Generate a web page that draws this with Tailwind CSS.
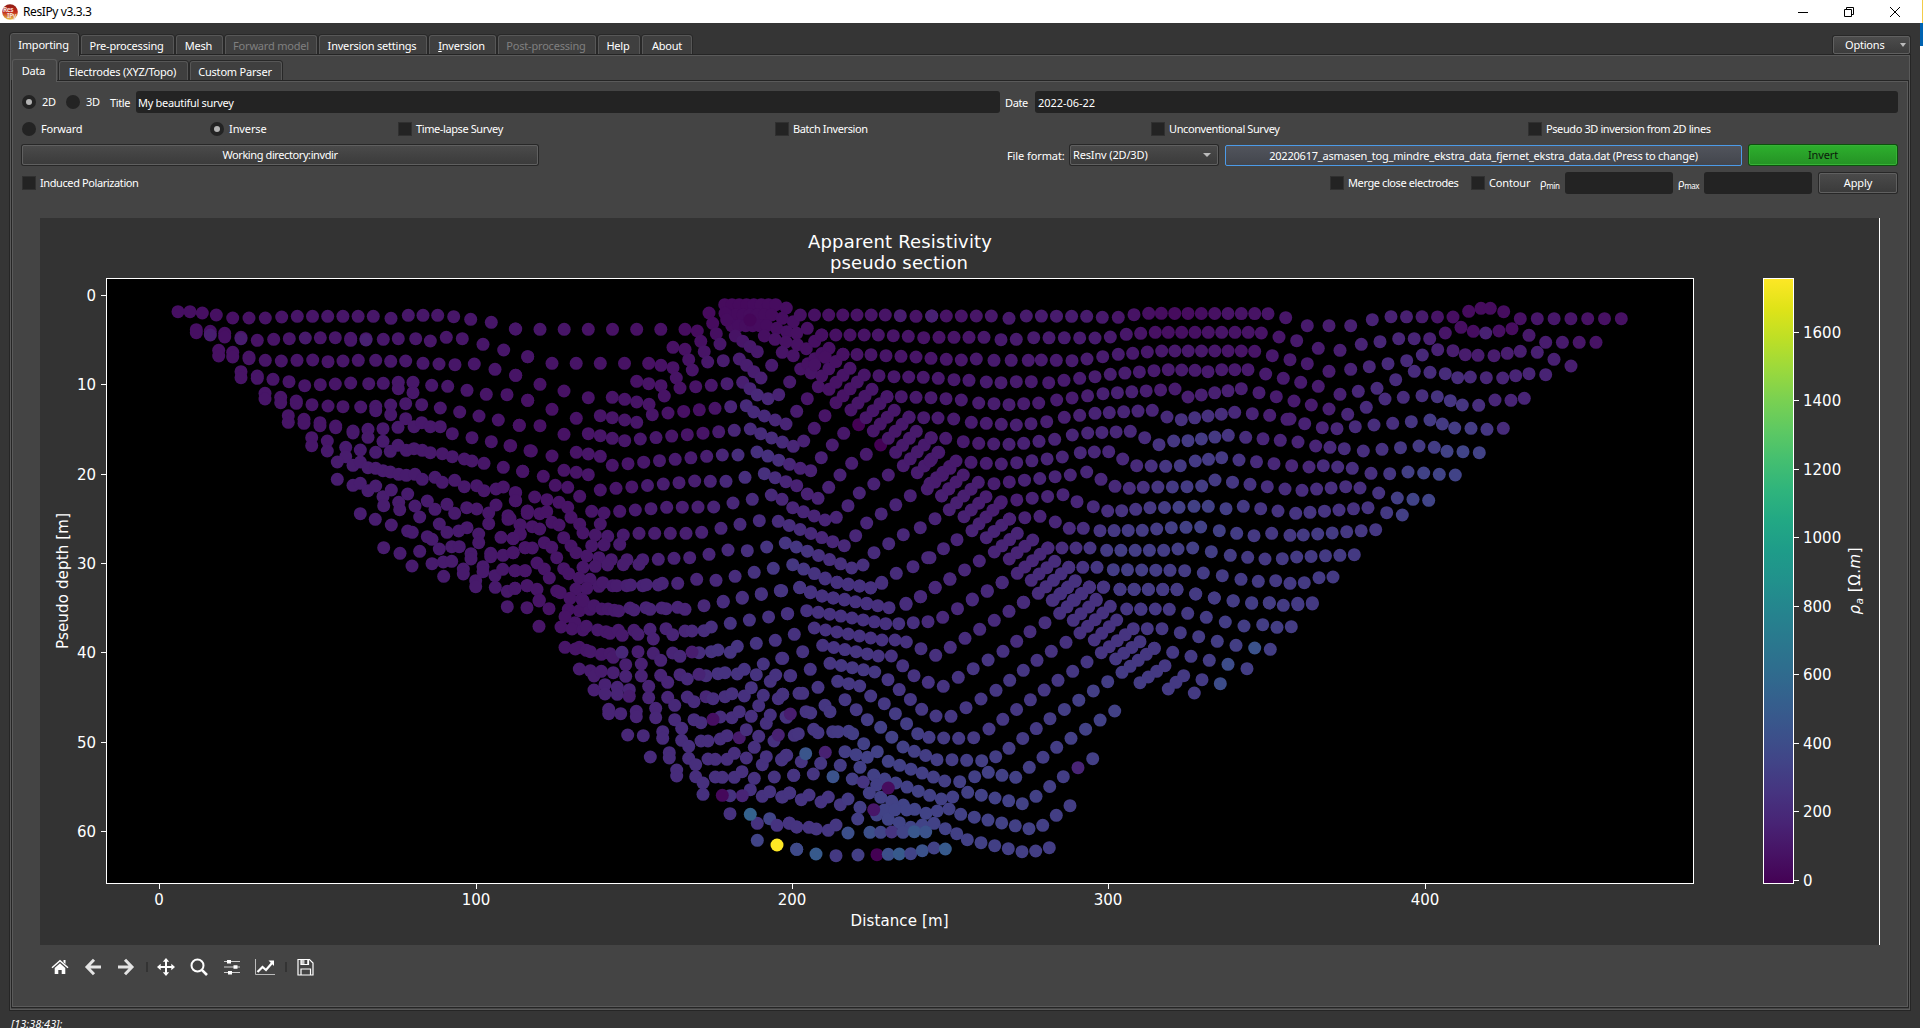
<!DOCTYPE html>
<html lang="en">
<head>
<meta charset="utf-8">
<title>ResIPy v3.3.3</title>
<script src="https://cdn.jsdelivr.net/npm/@tailwindcss/browser@4"></script>
</head>
<body class="w-[1923px] h-[1028px] overflow-hidden bg-[#353535] font-['Noto_Sans',sans-serif] text-[11px] leading-4 tracking-[-0.4px] text-white whitespace-nowrap flex">
<div class="w-[1920px] h-full flex flex-col shrink-0">
  <header class="h-[23px] shrink-0 bg-white text-black flex items-center pl-[2px] pr-[19px]">
    <svg class="size-4" viewBox="0 0 16 16"><defs><linearGradient id="lg" x1="0" y1="0" x2="0" y2="1"><stop offset="0" stop-color="#8c1a12"/><stop offset=".5" stop-color="#c22a1c"/><stop offset="1" stop-color="#e8c64a"/></linearGradient></defs><circle cx="8" cy="8" r="7.8" fill="url(#lg)"/><text x="1" y="7.5" font-size="6.5" font-weight="bold" fill="#f3dcd4">Res</text><text x="5" y="13.5" font-size="6.5" font-weight="bold" fill="#f3dcd4">IPy</text></svg>
    <span class="ml-[5px] text-[12px]">ResIPy v3.3.3</span>
    <div class="ml-auto flex items-center gap-[34px]">
      <svg class="w-[12px] h-[12px]" viewBox="0 0 12 12"><path d="M1 6.5h10" stroke="#000"/></svg>
      <svg class="w-[12px] h-[12px]" viewBox="0 0 12 12" fill="none" stroke="#000"><path d="M1.5 3.5h7v7h-7zM3.5 3.5v-2h7v7h-2"/></svg>
      <svg class="w-[12px] h-[12px]" viewBox="0 0 12 12"><path d="M1 1l10 10M11 1L1 11" stroke="#000"/></svg>
    </div>
  </header>

  <nav class="h-[32px] shrink-0 flex items-end pl-[10px] pr-[10px] text-center tracking-[-0.2px]">
    <div class="w-[69px] h-[23px] -mb-px z-10 rounded-t-[3px] border border-b-0 border-[#5a5a5a] bg-[#444] pt-[3px] pr-[2px] outline outline-[#242424] [clip-path:inset(-1px_-1px_0_-1px)]">Importing</div>
    <div class="ml-[2px] w-[93px] h-[20px] rounded-t-[3px] border border-b-0 border-[#575757] bg-[#3f3f3f] pt-[2px] pr-[2px] shadow-[0_0_0_1px_#282828]">Pre-processing</div>
    <div class="ml-[2px] w-[47px] h-[20px] rounded-t-[3px] border border-b-0 border-[#575757] bg-[#3f3f3f] pt-[2px] pr-[2px] shadow-[0_0_0_1px_#282828]">Mesh</div>
    <div class="ml-[2px] w-[92px] h-[20px] rounded-t-[3px] border border-b-0 border-[#575757] bg-[#3f3f3f] pt-[2px] shadow-[0_0_0_1px_#282828] text-[#7f7f7f]">Forward model</div>
    <div class="ml-[2px] w-[108px] h-[20px] rounded-t-[3px] border border-b-0 border-[#575757] bg-[#3f3f3f] pt-[2px] pr-[2px] shadow-[0_0_0_1px_#282828]">Inversion settings</div>
    <div class="ml-[2px] w-[67px] h-[20px] rounded-t-[3px] border border-b-0 border-[#575757] bg-[#3f3f3f] pt-[2px] pr-[2px] shadow-[0_0_0_1px_#282828]"><span class="underline">I</span>nversion</div>
    <div class="ml-[2px] w-[98px] h-[20px] rounded-t-[3px] border border-b-0 border-[#575757] bg-[#3f3f3f] pt-[2px] pr-[2px] shadow-[0_0_0_1px_#282828] text-[#7f7f7f]">Post-processing</div>
    <div class="ml-[2px] w-[42px] h-[20px] rounded-t-[3px] border border-b-0 border-[#575757] bg-[#3f3f3f] pt-[2px] pr-[2px] shadow-[0_0_0_1px_#282828]">Help</div>
    <div class="ml-[2px] w-[50px] h-[20px] rounded-t-[3px] border border-b-0 border-[#575757] bg-[#3f3f3f] pt-[2px] shadow-[0_0_0_1px_#282828]">About</div>
    <div class="ml-auto mb-[1px] w-[77px] h-[18px] flex items-center rounded-[2px] border border-[#606060] bg-linear-to-b from-[#4c4c4c] to-[#3c3c3c] shadow-[0_0_0_1px_#272727] pl-[11px] pr-[3px]">Options<svg class="ml-auto w-[6px] h-[4px]" viewBox="0 0 6 4"><path d="M0 0h6L3 4z" fill="#bbb"/></svg></div>
  </nav>

  <main class="ml-[10px] w-[1900px] h-[955px] shrink-0 bg-[#444] border border-[#5a5a5a] shadow-[0_0_0_1px_#252525] flex flex-col">
    <nav class="h-[25px] shrink-0 flex items-end pl-[1px] text-center tracking-[-0.2px]">
      <div class="w-[45px] h-[23px] -mb-px z-10 rounded-t-[3px] border border-b-0 border-[#5a5a5a] bg-[#444] pt-[3px] pr-[2px]">Data</div>
      <div class="ml-[2px] w-[129px] h-[20px] rounded-t-[3px] border border-b-0 border-[#575757] bg-[#3f3f3f] pt-[2px] pr-[2px] shadow-[0_0_0_1px_#282828]">Electrodes (XYZ/Topo)</div>
      <div class="ml-[2px] w-[92px] h-[20px] rounded-t-[3px] border border-b-0 border-[#575757] bg-[#3f3f3f] pt-[2px] pr-[2px] shadow-[0_0_0_1px_#282828]">Custom Parser</div>
    </nav>
    <section class="mx-[1px] mb-[2px] flex-1 border border-[#5a5a5a] shadow-[0_0_0_1px_#252525] flex flex-col pl-[9px] pr-[9px] pt-[9px]">
      <div class="h-[22px] shrink-0 flex items-center">
        <i class="size-[14px] rounded-full bg-[#232323] flex items-center justify-center"><b class="size-[6px] rounded-full bg-[#b4b4b4]"></b></i><span class="ml-[6px] w-[24px]">2D</span>
        <i class="size-[14px] rounded-full bg-[#232323]"></i><span class="ml-[6px] w-[24px]">3D</span>
        <span class="w-[26px] pt-px">Title</span>
        <div class="w-[864px] h-[22px] rounded-[3px] bg-[#232323] pl-[2px] pt-[4px] tracking-[-0.3px]">My beautiful survey</div>
        <span class="ml-[5px] w-[30px] pt-px">Date</span>
        <div class="flex-1 h-[22px] rounded-[3px] bg-[#232323] pl-[3px] pt-[4px] tracking-[-0.05px]">2022-06-22</div>
      </div>
      <div class="mt-[8px] h-[15px] shrink-0 flex items-center">
        <div class="w-[188px] flex items-center gap-[5px]"><i class="size-[14px] rounded-full bg-[#232323]"></i><span class="tracking-[-0.2px]">Forward</span></div>
        <div class="w-[188px] flex items-center gap-[5px]"><i class="size-[14px] rounded-full bg-[#232323] flex items-center justify-center"><b class="size-[6px] rounded-full bg-[#b4b4b4]"></b></i><span class="tracking-[-0.1px]">Inverse</span></div>
        <div class="w-[377px] flex items-center gap-[4px]"><i class="size-[14px] bg-[#232323] border border-[#303030]"></i>Time-lapse Survey</div>
        <div class="w-[376px] flex items-center gap-[4px]"><i class="size-[14px] bg-[#232323] border border-[#303030]"></i>Batch Inversion</div>
        <div class="w-[377px] flex items-center gap-[4px]"><i class="size-[14px] bg-[#232323] border border-[#303030]"></i>Unconventional Survey</div>
        <div class="flex items-center gap-[4px]"><i class="size-[14px] bg-[#232323] border border-[#303030]"></i>Pseudo 3D inversion from 2D lines</div>
      </div>
      <div class="mt-[9px] h-[20px] shrink-0 flex items-center text-center">
        <div class="w-[516px] h-[20px] leading-[18px] rounded-[2px] border border-[#606060] bg-linear-to-b from-[#4a4a4a] to-[#3b3b3b] shadow-[0_0_0_1px_#272727]">Working directory:invdir</div>
        <span class="ml-[469px] w-[63px] text-left pt-px tracking-[-0.1px]">File format:</span>
        <div class="w-[148px] h-[20px] rounded-[2px] border border-[#606060] bg-linear-to-b from-[#4a4a4a] to-[#3b3b3b] shadow-[0_0_0_1px_#272727] flex items-center pl-[2px] pr-[6px] tracking-[-0.15px]">ResInv (2D/3D)<svg class="ml-auto w-[8px] h-[4px]" viewBox="0 0 8 4"><path d="M0 0h8L4 4z" fill="#bbb"/></svg></div>
        <div class="ml-[7px] w-[517px] h-[21px] leading-[19px] rounded-[2px] border border-[#4c9be8] bg-linear-to-b from-[#51545c] to-[#43464d] tracking-[-0.21px]">20220617_asmasen_tog_mindre_ekstra_data_fjernet_ekstra_data.dat (Press to change)</div>
        <div class="ml-[7px] w-[148px] h-[20px] leading-[18px] rounded-[2px] border border-[#37b337] bg-linear-to-b from-[#2dae2d] to-[#259325] shadow-[0_0_0_1px_#0d500d] text-[#0b1a0b] tracking-[-0.1px]">Invert</div>
      </div>
      <div class="mt-[7px] h-[22px] shrink-0 flex items-center">
        <i class="size-[14px] bg-[#232323] border border-[#303030]"></i><span class="ml-[4px]">Induced Polarization</span>
        <div class="ml-auto flex items-center">
          <i class="size-[14px] bg-[#232323] border border-[#303030]"></i><span class="ml-[4px] w-[123px]">Merge close electrodes</span>
          <i class="size-[14px] bg-[#232323] border border-[#303030]"></i><span class="ml-[4px] w-[51px] tracking-[-0.15px]">Contour</span>
          <span class="w-[25px]">ρ<sub class="text-[8px]">min</sub></span><div class="w-[108px] h-[22px] rounded-[3px] bg-[#232323]"></div>
          <span class="ml-[5px] w-[26px]">ρ<sub class="text-[8px]">max</sub></span><div class="w-[108px] h-[22px] rounded-[3px] bg-[#232323]"></div>
          <div class="ml-[7px] mr-px w-[78px] h-[20px] leading-[17px] rounded-[2px] border border-[#606060] bg-linear-to-b from-[#4a4a4a] to-[#3b3b3b] shadow-[0_0_0_1px_#272727] text-center tracking-[-0.1px]">Apply</div>
        </div>
      </div>
      <svg id="plot" class="mt-[24px] ml-[18px] w-[1840px] h-[727px] shrink-0 font-['DejaVu_Sans',sans-serif] tracking-normal" viewBox="40 218 1840 727" fill="#fff">
        <defs><linearGradient id="vir" x1="0" y1="1" x2="0" y2="0"></linearGradient></defs>
        <rect x="40" y="218" width="1839" height="727" fill="#333"/>
        <rect x="1879" y="218" width="1" height="727"/>
        <rect x="106.5" y="278.5" width="1587" height="605" fill="#000" stroke="#fff"/>
        <g id="dots"></g>
        <rect x="1763.5" y="278.5" width="30" height="605" fill="url(#vir)" stroke="#fff"/>
        <g id="ticks" stroke="#fff"></g>
        <g id="labels" font-size="15"></g>
        <g text-anchor="middle">
          <text x="900" y="248" font-size="18" textLength="184">Apparent Resistivity</text>
          <text x="899" y="269" font-size="18" textLength="138">pseudo section</text>
          <text x="899.5" y="926" font-size="15" textLength="98">Distance [m]</text>
          <text transform="translate(68 581) rotate(-90)" font-size="15" textLength="136">Pseudo depth [m]</text>
          <text transform="translate(1860 581) rotate(-90)" font-size="15" textLength="67"><tspan font-style="italic">ρ</tspan><tspan font-style="italic" font-size="10.5" dy="3">a</tspan><tspan dy="-3"> [Ω.</tspan><tspan font-style="italic">m</tspan>]</text>
        </g>
      </svg>
      <div class="mt-[6px] h-[32px] shrink-0 flex items-center pl-[29px] text-[#e6e6e6]">
        <svg class="w-[18px] h-[18px]" viewBox="0 0 18 18" fill="#fff"><path d="M9 5.2l5.3 4.8v6h-3.6v-4H7.3v4H3.700v-6z"/><path d="M1 9.700l8-7 8 7" fill="none" stroke="#fff" stroke-width="1.500"/><path d="M12.500 2h2v4l-2-1.700z"/></svg>
        <svg class="ml-[15px] w-[18px] h-[18px]" viewBox="0 0 18 18" fill="none" stroke="#e4e4e4" stroke-width="3"><path d="M17 9H4M10 1.800L3 9l7 7.200"/></svg>
        <svg class="ml-[15px] w-[18px] h-[18px]" viewBox="0 0 18 18" fill="none" stroke="#e4e4e4" stroke-width="3"><path d="M1 9h13M8 1.800L15 9l-7 7.200"/></svg>
        <i class="ml-[11px] w-[2px] h-[10px] bg-[#333]"></i>
        <svg class="ml-[9px] w-[18px] h-[18px]" viewBox="0 0 18 18" fill="#fff"><path d="M9 0l3.200 3.700H10v4.300h4.300V5.800L18 9l-3.700 3.200V10H10v4.300h2.200L9 18l-3.200-3.700H8V10H3.700v2.200L0 9l3.700-3.200V8H8V3.700H5.800z"/></svg>
        <svg class="ml-[15px] w-[18px] h-[18px]" viewBox="0 0 18 18" fill="none" stroke="#fff"><circle cx="7.500" cy="7.500" r="6" stroke-width="2"/><path d="M11.800 11.800L17 17" stroke-width="2.600"/></svg>
        <svg class="ml-[15px] w-[18px] h-[18px]" viewBox="0 0 18 18" fill="#fff"><path d="M1 3.500h16M1 9h16M1 14.500h16" stroke="#ccc"/><path d="M4 2h4v3.500H4zM10.500 7.300h4v3.500h-4zM5 13h4v3.500H5z"/></svg>
        <svg class="ml-[14px] w-[20px] h-[18px]" viewBox="0 0 20 18" fill="none" stroke="#fff"><path d="M.500 1v15.500H20" stroke="#bbb"/><path d="M2.500 14l5-5 3.500 3 6-7" stroke-width="2.200"/><path d="M13.500 2.500H19V8z" fill="#fff" stroke="none"/></svg>
        <i class="ml-[10px] w-[2px] h-[10px] bg-[#333]"></i>
        <svg class="ml-[10px] w-[17px] h-[18px]" viewBox="0 0 17 18" fill="none" stroke="#fff" stroke-width="1.200"><path d="M1 1.500h11.500L16 5v12H1zM4 17v-6h9.500v6"/><path d="M4 1.500h7.500v5H4z" fill="#ccc"/><path d="M7.500 2h2.500v4H7.500z" fill="#444" stroke="none"/></svg>
      </div>
    </section>
  </main>
  <footer class="pt-[6px] pl-[11px] italic tracking-[0px]">[13:38:43]:</footer>
</div>
<aside class="w-[3px] h-full flex flex-col bg-white"><div class="h-[23px] border-r border-[#f2cc4a]"></div><div class="h-[23px] bg-[#0063b1]"></div></aside>

<script>
// Measurement positions. Each block has an origin; coordinates are in thirds of a pixel.
// "x,y*n" adds n evenly spaced points from the previous one; "x,y@t" fixes the colour value.
const blocks = [
[90,270,`264,125 300,125 337,129 379,135 428,144 526,144*2 575,141 622,139 850,139*5 903,145 955,136 1043,136*2 1091,140 1142,148 1204,157 1276,177
319,179 319,188 361,184 361,195@.08 404,190 404,201 453,202 453,206@.08 502,211 551,208 598,206 646,204@.07 736,203*2 782,205 782,211@.06 828,206 828,210@.09 880,208 925,206 977,206 1021,213 1069,202 1117,206 1179,223 1241,240 1313,260
386,241 386,258 428,247 428,261 477,261 477,266 526,271 574,273 621,271 668,270 714,275 759,273 805,271 857,271 902,274 947,273 999,280 1047,282 1095,284 1153,282 1215,298 1277,316
453,305 453,323 502,318 502,325 549,328 597,335 644,347 691,344 736,342 782,339 836,341 880,340 925,337 925,356 969,337 969,368 1025,346 1073,349 1131,361 1189,373 1251,374 1313,391
525,370 525,387 572,382 572,398 619,393 619,400 666,404 714,408 759,410 812,411 857,409 857,422 902,405 902,434 947,401 995,404 1051,414 1109,426 1167,438 1225,450 1288,466
595,437 595,457 642,448 642,460 690,458 690,467 737,468 737,473 789,483 789,489 834,478 834,502 879,476 879,514 924,472 947,446 972,470 995,458 1021,470 1051,470 1087,491 1146,503 1204,515 1262,527 1320,542
665,503 665,527 712,513 712,543 767,532 767,560 811,540 857,547 901,544 924,526 949,541 972,536 997,541 1021,548 1057,551 1087,560 1123,567 1146,573 1182,580 1240,592 1298,604
742,576 789,586 811,576 834,593 857,595 879,602 901,606 926,613 949,616 975,613 997,628 1035,622 1057,637 1094,631 1123,650 1160,647 1182,662 1218,657 1240,651 1276,668 1276,692
742,628 789,646 811,640 834,662 857,648 879,680 904,660 881,707 926,697 953,672 929,719 975,708 1012,693 989,741 1035,718 1071,703 1094,730 1130,713 1160,717 1196,729 1218,705 1196,761 1254,737 1254,748 1313,723
811,731 856,748 904,765 953,783 967,787 1012,800 1026,808 1048,762 1071,787 1106,783 1131,773 1166,792 1166,818 1233,802 1269,806 1291,793 1291,765
881,833 930,850 989,844 966,888 1026,881 1048,837 1085,830 1108,830 1060,876 1085,874 1143,851 1143,867 1202,850 1202,860 1239,856 1269,848 1306,833 1061,919 1120,897 1120,912 1179,890 1179,905 1157,932 1157,950 1215,917 1238,898 1275,902 1306,902 1216,952 1252,964 1275,955 1311,947`],
[510,270,`17,177 90,178 525,178*6
562,183 593,276*3 640,272
597,129 630,222*3
53,260 126,280 416,280*4 453,286 489,293 499,324 510,354 557,350 604,346 651,341
489,232 525,238 536,269 547,300
17,316 90,343 162,363 235,383 307,382 344,388 380,396 417,403 427,434 474,429 662,410*4
380,334 416,341 453,347 463,378
53,391 126,418 199,445 271,437 307,443 344,450 380,457
28,466 90,467 162,493 235,491 271,497 307,505 344,512 391,507 673,481*6
0,527 64,543 126,558 199,547 235,552 271,559 307,586 354,581 590,559*5 637,555 684,555
38,604 100,619 162,601 199,607 235,614 271,660 318,655 507,638*4 554,633 601,634 648,634 705,622
136,646 173,652 209,679
17,668 17,692 74,681 111,689 147,697 173,712 245,724 282,729 329,724 376,720 423,716 470,712 611,711*3 669,699 727,688
52,724 52,730 89,731 110,725 126,757 147,765 183,742 209,763 219,789 271,762 256,795 293,799 340,795 387,790 528,790*3 575,787 633,775 690,763 748,752
0,745 30,765 30,791 67,770 89,777 10,805
245,827 282,825 329,823
161,803 183,828 103,818 125,832 198,848 230,858 267,863 304,869 351,869 398,869 445,868 492,865 539,863 597,853 654,840 712,842 770,831
45,833 67,834 10,848 140,863 81,879 103,897 161,896 176,911 219,892 256,889 293,885 340,884 387,883 118,924 208,924 240,928
15,902 45,902 15,955 52,947 81,958 140,963 151,968 198,957 230,955 267,949 278,938 308,947 320,947 350,947 362,945 398,947 409,944 445,945 457,940 503,940 560,928 618,931 790,895*3
88,990 180,985 215,987
640,994 697,982 754,971 812,962
644,104 797,104*7 829,114
655,135 785,135*6 817,145 850,155
665,167 770,167*5 800,175 830,185 860,190 892,175
645,130 650,150 720,150@.015
763,198 795,208 828,216 862,224 889,236 914,214 935,195
817,247 850,257 872,297 957,235*4
903,309 914,285 946,262
935,318 999,253*3
925,350
957,358 1020,295*3
978,398 1063,315*4
1023,420 1086,358*3
1046,464@0 1068,443 1131,380*3
1090,483 1153,421*3
1112,525@0 1135,505 1197,442*3
1157,547 1219,484*3
1180,587 1264,504*4
1222,608 1286,547*3
1252,657 1320,595*3
1295,677 1316,656
871,135 1126,135*6 1171,137@.08 1218,139 1265,138@.09
935,195 1105,195*4 1150,197 1195,199 1241,203
999,253 1083,254*2 1128,257 1173,259 1218,261
1107,317 1152,320 1196,321 1240,322
1131,380 1174,380 1218,382
1197,441 1241,443
676,198 742,245*3
688,267 753,324*3 785,286
698,337 742,375*2 774,386 806,374 839,336
709,407 731,426 828,462*3 860,424 892,386
721,477 752,491 850,529*3 881,513 913,475 945,437
741,546 871,595*4 902,602 934,563 967,525 1001,490
763,611 860,647*3 892,672 924,685 956,652 990,615 1025,580 1069,553
784,675 816,688 848,713 945,750*3 979,742 1014,707 1048,669 1135,615*2
805,754 968,815*5 1003,827 1037,797 1070,759 1201,677*3
826,819 859,831 1025,894*5 1059,885 1092,848 1180,794*2 1231,773
848,884 946,924*3 981,937 1014,944 1048,948 1082,954 1115,937 1159,910 1209,890 1253,863
869,953 936,978*2 970,984 1004,988 1070,1000
1188,1000 1231,980`],
[930,270,`5,138@.09 49,138 184,138*3 237,145 289,138 470,139*4 517,142 565,142 612,134 656,130 694,130 1014,131*8 1067,143
27,202 162,202*3 213,209 259,208 311,203 495,204*4 541,201 589,193 632,190 676,187 715,187 955,187*6 994,189 1047,201
3,265 49,268 94,270 139,267 192,271 295,271*2 334,270 379,271 426,272 471,267 518,260 565,253 608,250 652,246 695,243 934,243*6 974,244 1027,257
25,325 72,329 117,331 169,336 213,338 259,335 304,335 356,338 402,331 449,325 495,320 541,313 672,302*3 715,299 795,301*2 834,305 875,299 954,299*2 1007,312 1060,325
3,383 48,386 94,390 146,399 192,401 237,404 281,401 326,399 380,390 519,371*3 735,357*5 774,381 934,356*4 987,368 1039,380
24,444 71,447 124,457 169,460 214,463 259,465 303,461 350,455 403,442 449,436 495,430 667,421*4 711,441 754,449 914,427*4 967,431 1019,436 1071,448
3,503 47,505 100,515 146,520 191,522 237,523 281,520 327,514 374,508 427,495 473,489 601,484*3 644,503 687,524 731,513 774,512 895,496*3 947,502 1051,511*2
123,577 169,580 214,582 260,578 397,561*3 451,548 493,546 536,545 578,567 620,587 707,589*2 751,587 796,573 875,563*2 927,570 1032,581*2
192,641 421,615*5 470,606 513,628 555,649 598,655 640,652 771,650*3 815,648 855,630 960,643*2 1012,650 1065,657
214,695 399,674*4 441,695 490,710 533,723 575,722 617,718 660,713 747,712*2 792,709 835,709 888,716 940,709 1044,723*2
239,747 330,739*2 376,756 418,775 460,775 510,782 637,781*3 680,777 724,773 768,772 812,771 868,782 920,790 972,797 1025,790
354,834 480,834*3 530,841 701,841*4 744,837 788,834 844,845 901,856 953,862 1005,867 1057,866
416,892 501,892*2 550,899 720,901*4 764,902 820,909 877,917 933,928 985,934 1037,932
478,951 521,951 570,958 741,959*4 797,972 853,984 910,992 965,998 1018,998
0,573 24,547
0,640 78,573*4
35,678 100,615*3
58,719 145,637*4
102,740 168,680*3
126,782 210,700*4
169,803 238,747*3
193,846 262,790*3
238,867 308,810*3
262,910 353,834*4
304,931 374,874*3
325,970 416,892*4
370,990 436,932*3
430,990 478,951*2
498,988
15,746
0,863 81,809*2
15,953 148,873*3
127,987 217,937*2
280,997`],
[1290,270,`52,167 117,167 182,167 247,149 303,140 489,141*4 536,124 573,115 601,115 641,125 691,146 742,146 994,146*5
20,212 85,235 150,241 214,223 270,215 326,206 419,206*2 466,189 513,172 550,184 587,189@.09 627,183 666,176@.03 717,196 767,217 918,217*3
0,269 52,281 117,304 182,298 238,290 294,281 350,272 397,255 443,239 489,242 526,254 564,256 612,257 652,250 691,244 742,247 792,268 843,288
32,337 85,349 150,373 205,364 261,355 317,329 373,304 420,307 466,311 503,323 541,321 589,323 638,324 677,317 717,311 767,314
12,393 64,405 117,417 173,433 229,412 285,387 340,382 396,377 442,380 481,392 517,405 566,406 615,390 663,391 703,385
0,447 44,461 97,473 141,476 196,470 252,465 420,450*3 457,462 494,474 543,475 591,478 640,475
24,516 77,528 120,532 163,536 220,543 276,538 387,528*2 433,532 471,544 519,545 568,548
5,587 57,591 100,587 143,591 187,595 243,610 299,611 354,606 401,609 448,613 496,615
36,661 167,650*3 210,654 266,669 322,684 369,688 416,691
17,730 60,727 234,713*4 290,728 337,735
0,796 40,795 83,792 257,779*4
20,861 193,854*4
0,940 43,938 87,923 129,921
23,1000 67,998`],
[400,580,`322,80 381,83 417,63 447,86 417,139
550,65 505,88 538,92 570,88 549,62 582,77 605,87 624,87 643,91 656,93 690,84 702,90 738,83 750,88 785,84 798,86 833,82 855,88 912,77 1141,32*4
495,110 483,141 525,128 516,147 549,150 559,139 593,150 618,155 630,160 655,151 667,166 702,151 714,163 750,148 760,177 798,146 818,164 855,153 876,153 912,152 934,141 991,130 1163,101*3
495,202 538,202 526,207 559,211 571,215 604,223 630,221 640,232 666,217@.11 714,215 760,220 782,241 818,219 840,229 897,218 876,216@.08 934,215 954,210 991,217 1012,199 1069,190 1126,181
538,267 571,272 582,288 604,274 640,278 677,254 677,289 724,252 724,288 782,286 803,307 840,284 862,297 918,287 897,283@.1 954,281 975,278 1012,282 1033,268 1069,284 1090,252 1148,235
582,330 615,314 615,342 652,322 652,343 688,329 688,349@.08 746,319 746,353 803,352 824,376 862,351 882,365 918,350@.11 939,356 975,350 996,341 1033,348 1054,323 1111,304 1127,285 1170,287
626,388 626,401 662,401 709,394 709,410 767,385 767,413 824,419 845,445 882,419 903,428 961,411 939,418@.04 996,413 1018,395 1054,409 1076,377 1090,346 1135,356 1148,343
683,465 730,467 788,455 788,475 845,481 866,499 903,483 924,483 961,477 981,467 1018,473@.07 1039,449 1076,469 1099,430 1111,405 1158,410
751,531 808,518 808,534 866,535 887,554 924,537 946,538 981,538 1003,520 1039,534 1063,502 1122,483 1135,465@.09
830,570 830,588 887,590 909,609 946,591 967,592 1003,592 1026,575 1063,595 1087,554 1099,530 1145,538 1160,526
909,643 990,647 967,646@.02 1051,629 1027,647@.1 1087,649 1109,635 1145,651 1123,591 1181,586 1168,639
990,701 1072,730 1051,703@.31 1109,716@.2 1131,736 1168,730 1190,741 1072,781@.2 1131,795@1 1190,808@.24`],
[780,580,`5,32 59,22 91,38 126,48 327,83*6 378,73 422,50 466,22 510,-2
135,-3 171,7 205,12 239,18 272,23 305,10
22,101 80,92 115,97 317,131*6 356,131 400,128 444,125 488,112 666,8*4
43,163 103,144 306,180*6 345,180 379,186 423,206 467,226 511,202 731,67*5
5,235 68,215 128,196 295,228*5 334,228 402,287*2 445,307 490,319 535,292 669,214*3 710,184 750,155 795,128
32,287 91,268 150,250 284,276*4 324,299 425,388*3 468,408 513,409 558,383 648,331*2 771,241*3 814,214 858,187
8,343 57,340 68,340 114,322 173,304 239,318*2 272,348 313,371 413,461*3 447,472 491,474 536,475 581,473 627,447 834,301*5 878,274 921,246
20,412 31,402@.08 78,395 92,399 135,376 150,395 195,359 262,419*2 302,442 369,501*2 403,514 471,539*2 516,539 560,541 605,542 647,530 687,505 810,416*3 983,305*4
43,466 55,461 101,448 114,458 158,455 174,455 206,454 218,461 251,491 292,515 262,532 325,544 494,603*5 539,605 584,590 625,577 666,586 707,592 830,502*3 873,475 1004,393*3
5,540 18,526 64,545 77,521@.26 136,517@.09 122,550 181,556 195,515 228,524 240,562 281,585 314,597 347,609 449,646*3 484,657 518,651 563,637 727,671*4 768,649 850,590*2 894,563@.1 938,536
41,586 100,582 159,590@.25 217,597 250,606@.15 290,615 268,639 302,652 335,664 370,675 404,688 438,700 472,693 507,687 542,703 747,746*5 788,736 829,706 870,677
8,651 29,639 64,659 87,645 123,666 145,651 181,674 204,657 240,682 233,717 290,705 313,690 325,718 345,690 358,728 380,690 392,742 427,735 462,730 496,746 530,761 562,779 726,815*4 767,813 808,803
325,624@.03 281,689@.06
28,729 50,741 87,742 109,747 145,751 168,735 204,759@.24 270,757@.24 302,757 335,756@.15 369,757 403,755@.27 437,756@.25
50,808@.22 108,822@.28 168,827 234,825 291,824@0 325,823@.24 358,822@.28 392,821 427,812@.25 462,804 496,807@.28
817,61 885,4*3
839,100 928,22*4
880,121 949,61*3
900,159 991,79*4
943,180 1010,120*3
964,218 1060,146*4
1007,237 1080,185*3
1026,277 1123,205*4
1080,308 1155,257*3
970,22 1020,28 1062,28
1040,87 1083,88`],
[1140,580,`25,28 68,28 111,28 167,42 223,54 279,63 335,70 388,69 430,76 474,74 517,72
2,87 46,87 88,88 143,100 199,112 256,126 312,138 368,134 411,142 454,140
22,146 66,146 121,158 176,170 232,184 288,196 344,204@.25 391,208
43,205 98,217 153,229 208,241 264,253@.23 321,266
85,327 108,307 131,287 186,299 241,311@.23
163,339`]];

// Resistivity level (0..1) sampled at places in the section
const field = [[180,315,.04],[300,400,.055],[350,500,.08],[420,560,.075],[480,330,.06],[550,420,.045],[560,500,.05],[545,560,.055],[600,640,.065],[620,480,.055],[700,410,.04],[660,500,.08],[650,350,.045],[700,310,.025],[740,300,.025],[760,315,.03],[820,340,.04],[740,365,.08],[750,410,.12],[760,460,.14],[790,560,.16],[850,590,.14],[810,480,.09],[830,520,.1],[830,400,.05],[870,420,.06],[950,450,.07],[1000,500,.08],[1000,540,.10],[1080,600,.14],[1000,620,.12],[940,600,.11],[1180,312,.03],[1180,370,.07],[1250,330,.05],[930,320,.05],[1050,380,.07],[1050,480,.1],[1100,460,.11],[1200,450,.17],[1200,520,.19],[1130,560,.18],[1300,400,.07],[1300,370,.07],[1300,440,.1],[1350,470,.13],[1400,400,.12],[1430,430,.17],[1460,460,.2],[1430,490,.2],[1320,550,.17],[1250,640,.18],[1480,310,.03],[1620,320,.045],[1520,400,.10],[640,770,.12],[570,680,.08],[620,700,.1],[700,750,.13],[720,800,.14],[800,800,.15],[880,750,.19],[900,830,.2],[1000,800,.19],[1000,680,.16],[860,680,.16],[900,640,.14],[1100,720,.19],[740,650,.15],[660,600,.1],[480,600,.07],[560,610,.05],[570,640,.055]];
const viridis = ['440154','471365','482475','463480','414487','3b528b','355f8d','2f6c8e','2a788e','25848e','21918c','1e9c89','22a884','2fb47c','44bf70','5ec962','7ad151','9bd93c','bddf26','dfe318','fde725'];
const rgb = h => [0,2,4].map(i => parseInt(h.substr(i,2),16));
function colour(t){
  const p = Math.min(19.999, Math.max(0, t*20)), i = Math.floor(p), a = rgb(viridis[i]), b = rgb(viridis[i+1]);
  return 'rgb(' + a.map((v,k) => Math.round(v+(b[k]-v)*(p-i))).join(',') + ')';
}
function level(x,y){
  let s=0,w=0;
  for (const [a,b,t] of field){ const k = 1/Math.pow((a-x)**2+(b-y)**2+60,1.6); s+=k*t; w+=k; }
  return s/w;
}
let out='';
for (const [ox,oy,rows] of blocks) for (const row of rows.split('\n')) {
  let px,py;
  for (const item of row.trim().split(' ')) {
    const m = item.match(/^(-?[\d.]+),(-?[\d.]+)(?:@([\d.]+))?(?:\*(\d+))?$/);
    const x=+m[1], y=+m[2], n=+(m[4]||1);
    for (let i=1;i<=n;i++){
      const gx = ox+(n>1?px+(x-px)*i/n:x)/3, gy = oy+(n>1?py+(y-py)*i/n:y)/3;
      out += `<circle cx="${gx.toFixed(1)}" cy="${gy.toFixed(1)}" r="6.5" fill="${colour(m[3]!==undefined?+m[3]:level(gx,gy))}"/>`;
    }
    px=x; py=y;
  }
}
document.getElementById('dots').innerHTML = out;
document.getElementById('vir').innerHTML = viridis.map((c,i)=>`<stop offset="${i*5}%" stop-color="#${c}"/>`).join('');
let t='', l='';
for (let i=0;i<7;i++){ const y=Math.round(294.7+i*89.4)+.5; t+=`<path d="M101 ${y}h5"/>`; l+=`<text x="96" y="${y+5}" text-anchor="end">${i*10}</text>`; }
for (let i=0;i<5;i++){ const x=Math.round(159.2+i*316.4)+.5; t+=`<path d="M${x} 884v5"/>`; l+=`<text x="${x-.5}" y="904.500" text-anchor="middle">${i*100}</text>`; }
for (let i=0;i<9;i++){ const y=Math.round(879.5-i*68.5)+.5; t+=`<path d="M1794 ${y}h5"/>`; l+=`<text x="1803" y="${y+5.500}">${i*200}</text>`; }
document.getElementById('ticks').innerHTML=t;
document.getElementById('labels').innerHTML=l;
</script>
</body>
</html>
